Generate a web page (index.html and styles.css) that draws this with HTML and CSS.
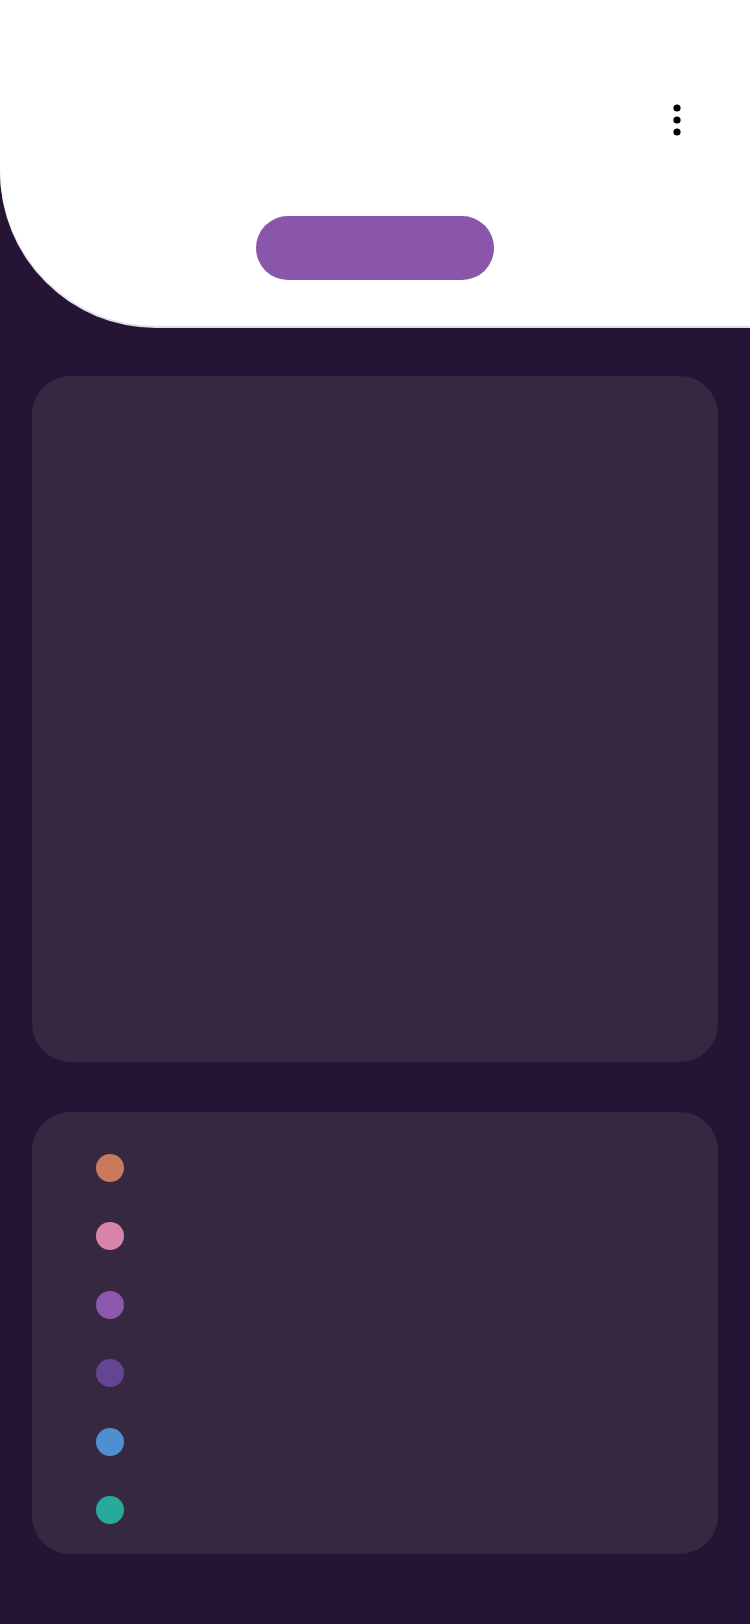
FILE: index.html
```html
<!DOCTYPE html>
<html>
<head>
<meta charset="utf-8">
<link rel="stylesheet" href="styles.css">
</head>
<body>
  <header class="top">
    <div class="top-bar">
      <button class="menu-btn" aria-label="More">
        <svg width="48" height="48" viewBox="0 0 24 24"><circle cx="12" cy="6" r="1.8" fill="#000"/><circle cx="12" cy="12" r="1.8" fill="#000"/><circle cx="12" cy="18" r="1.8" fill="#000"/></svg>
      </button>
    </div>
    <div class="pill"></div>
  </header>
  <main class="content">
    <section class="card chart"></section>
    <section class="card legend">
      <div class="row"><span class="dot c1"></span></div>
      <div class="row"><span class="dot c2"></span></div>
      <div class="row"><span class="dot c3"></span></div>
      <div class="row"><span class="dot c4"></span></div>
      <div class="row"><span class="dot c5"></span></div>
      <div class="row"><span class="dot c6"></span></div>
    </section>
  </main>
</body>
</html>
```
FILE: styles.css
```css
html, body {
  margin: 0;
  padding: 0;
}
body {
  background: #251433;
  width: 750px;
  min-height: 1624px;
  font-family: "Roboto", sans-serif;
}
.top {
  box-sizing: border-box;
  height: 326px;
  margin-bottom: 2px;
  background: #ffffff;
  border-bottom-left-radius: 156px;
  box-shadow: 0 2px 0 #e3dcea;
  display: flex;
  flex-direction: column;
  align-items: center;
}
.top-bar {
  align-self: stretch;
  display: flex;
  justify-content: flex-end;
  padding-top: 96px;
  padding-right: 49px;
}
.menu-btn {
  width: 48px;
  height: 48px;
  padding: 0;
  border: 0;
  background: transparent;
  display: block;
}
.menu-btn svg { display: block; }
.pill {
  margin-top: 72px;
  width: 238px;
  height: 64px;
  border-radius: 32px;
  background: #8a56a9;
}
.content {
  padding: 48px 32px 0 32px;
  display: flex;
  flex-direction: column;
  gap: 50px;
}
.card {
  background: #372841;
  border-radius: 38px;
}
.chart {
  height: 686px;
}
.legend {
  box-sizing: border-box;
  height: 442px;
  padding: 42px 64px 30px;
  display: flex;
  flex-direction: column;
  gap: 40.4px;
}
.row {
  height: 28px;
  display: flex;
  align-items: center;
}
.dot {
  width: 28px;
  height: 28px;
  border-radius: 50%;
  display: block;
}
.c1 { background: #c97a5a; }
.c2 { background: #d884aa; }
.c3 { background: #8b58ae; }
.c4 { background: #644594; }
.c5 { background: #4f8fd1; }
.c6 { background: #27aa9b; }
```
